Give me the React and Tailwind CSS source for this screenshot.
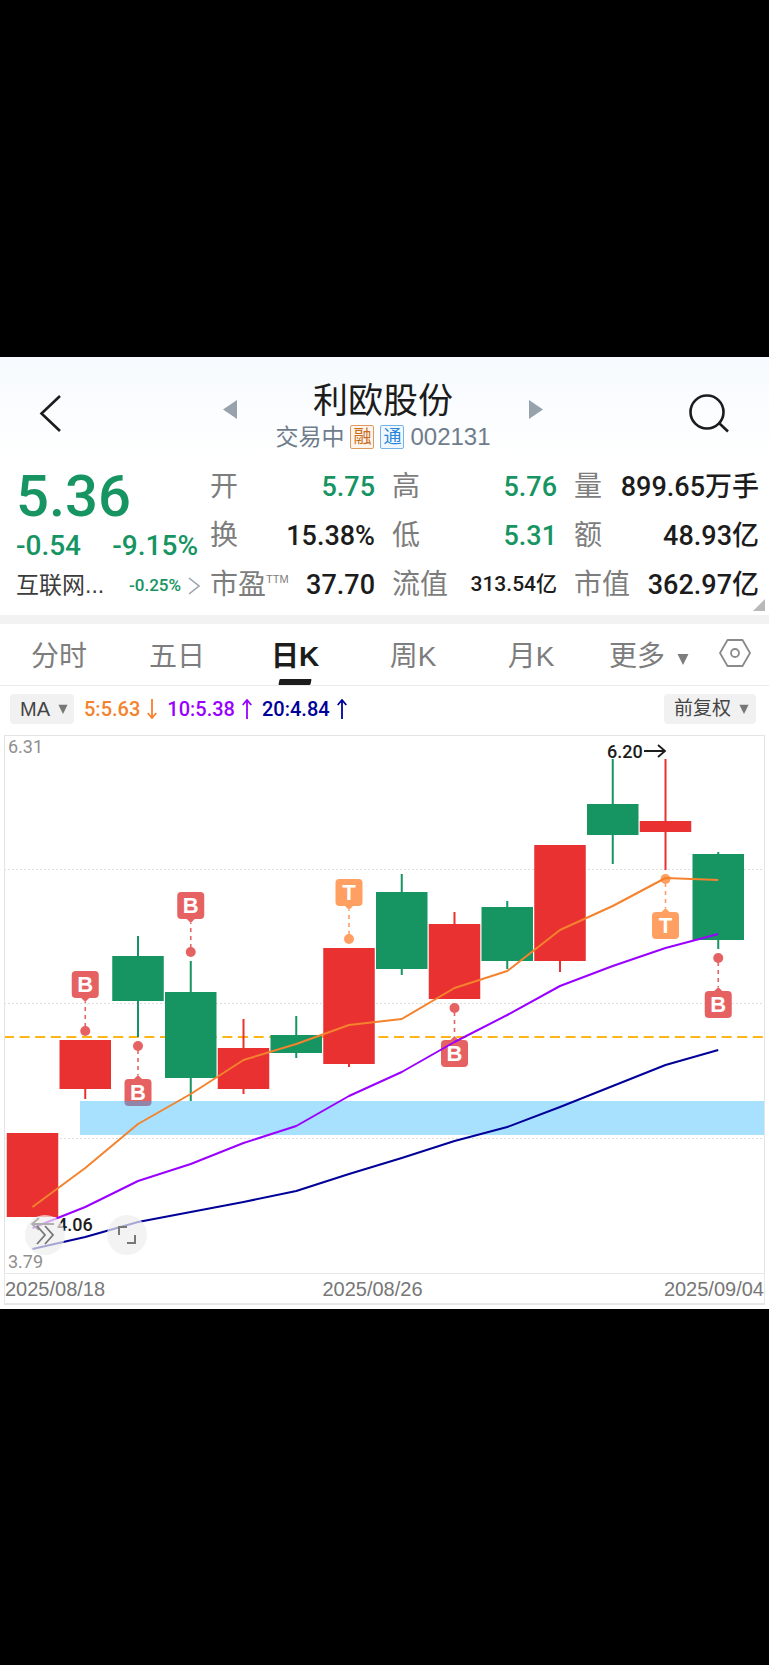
import { useState } from 'react'
import { clsx } from 'clsx'

const STATS = [
  { label: '开', value: '5.75', down: true },
  { label: '高', value: '5.76', down: true },
  { label: '量', value: '899.65万手' },
  { label: '换', value: '15.38%' },
  { label: '低', value: '5.31', down: true },
  { label: '额', value: '48.93亿' },
  { label: '市盈', sup: 'TTM', value: '37.70' },
  { label: '流值', value: '313.54亿', small: true },
  { label: '市值', value: '362.97亿' },
]

const TABS = ['分时', '五日', '日K', '周K', '月K']

const AVERAGES = [
  { text: '5:5.63', dir: 'down', color: 'text-[#f5822d]' },
  { text: '10:5.38', dir: 'up', color: 'text-[#9a00ff]' },
  { text: '20:4.84', dir: 'up', color: 'text-[#000099]' },
]

const RED = '#e93131'
const GREEN = '#169462'

// Candles are evenly spaced along x
const xAt = (i) => 28.5 + i * 52.75

// [high, bodyTop, bodyBottom, low, color]
const CANDLES = [
  [398, 398, 482, 482, RED],
  [305, 305, 354, 364, RED],
  [201, 221, 266, 302, GREEN],
  [226, 257, 343, 366, GREEN],
  [284, 313, 354, 359, RED],
  [281, 300, 318, 323, GREEN],
  [213, 213, 329, 332, RED],
  [139, 157, 234, 240, GREEN],
  [177, 189, 264, 264, RED],
  [166, 172, 226, 234, GREEN],
  [110, 110, 226, 237, RED],
  [24, 69, 100, 129, GREEN],
  [24, 86, 97, 135, RED],
  [117, 119, 205, 214, GREEN],
]

const MA_LINES = [
  { color: '#f5822d', ys: [472, 433, 389, 359, 325, 309, 290, 284, 253, 236, 195, 171, 143, 145] },
  { color: '#9a00ff', ys: [493, 472, 446, 429, 408, 391, 361, 337, 307, 280, 251, 231, 213, 199] },
  { color: '#000099', ys: [514, 502, 487, 477, 467, 456, 439, 423, 406, 392, 372, 351, 330, 315] },
]

// box = top of the label square, dot = centre of the anchor dot
const MARKERS = [
  { i: 1, type: 'B', box: 236, dot: 296 },
  { i: 2, type: 'B', box: 344, dot: 311 },
  { i: 3, type: 'B', box: 157, dot: 217 },
  { i: 6, type: 'T', box: 144, dot: 204 },
  { i: 8, type: 'B', box: 305, dot: 273 },
  { i: 12, type: 'T', box: 177, dot: 144 },
  { i: 13, type: 'B', box: 256, dot: 223 },
]

function Caret({ className }) {
  return (
    <svg viewBox="0 0 12 12" className={className} fill="currentColor" aria-hidden="true">
      <path d="M0.5 1h11L6 12z" />
    </svg>
  )
}

function TrendArrow({ dir }) {
  return (
    <svg viewBox="0 0 10 20" className="h-5 w-2.5" fill="none" stroke="currentColor" strokeWidth="1.8" aria-hidden="true">
      <path d={dir === 'up' ? 'M5 20V1M0.7 6L5 1l4.3 5' : 'M5 0v19M0.7 14L5 19l4.3-5'} />
    </svg>
  )
}

function Header() {
  return (
    <header className="flex items-start justify-between pt-[23px] pr-10 pb-[11px] pl-[37px]">
      <button aria-label="返回" className="mt-[13px] flex h-10 w-10 items-center text-[#1c1c1c]">
        <svg viewBox="0 0 28 40" className="h-10 w-7" fill="none" stroke="currentColor" strokeWidth="2.6">
          <path d="M23 3L4.500 20.500L23 38" />
        </svg>
      </button>
      <div className="flex items-start gap-[38px]">
        <button aria-label="上一只" className="mt-[20px] text-[#98a2ad]">
          <svg viewBox="0 0 14 20" className="h-5 w-3.5" fill="currentColor"><path d="M14 0v19L0 9.500z" /></svg>
        </button>
        <div className="flex flex-col items-center">
          <h1 className="text-[35px] leading-[42px] text-[#1c1c1c]">利欧股份</h1>
          <div className="flex items-center gap-[6px] text-[23px] leading-[30px] text-[#6f7c8b]">
            <span>交易中</span>
            <span className="flex h-6 w-6 items-center justify-center rounded-[2px] border border-[#dc9a62] bg-[#fdf5ec] text-[18px] text-[#c96d1c]">融</span>
            <span className="flex h-6 w-6 items-center justify-center rounded-[2px] border border-[#79b2e6] bg-[#f0f8ff] text-[18px] text-[#2b85d8]">通</span>
            <span className="text-[24px]">002131</span>
          </div>
        </div>
        <button aria-label="下一只" className="mt-[20px] text-[#98a2ad]">
          <svg viewBox="0 0 14 20" className="h-5 w-3.5" fill="currentColor"><path d="M0 0v19L14 9.500z" /></svg>
        </button>
      </div>
      <button aria-label="搜索" className="mt-[13px] text-[#1c1c1c]">
        <svg viewBox="0 0 40 40" className="h-10 w-10" fill="none" stroke="currentColor" strokeWidth="2.6">
          <circle cx="18" cy="19" r="16.500" />
          <path d="M30 30l9 8.500" />
        </svg>
      </button>
    </header>
  )
}

function Quote() {
  return (
    <section className="relative flex pr-[10px] pb-[5px] pl-4">
      <div className="w-[184px] shrink-0 text-[#169462]">
        <div className="font-['Roboto',sans-serif] text-[58px] leading-[66px] font-medium">5.36</div>
        <div className="flex justify-between pr-[2px] font-['Roboto',sans-serif] text-[28px] leading-[34px] font-medium">
          <span>-0.54</span>
          <span>-9.15%</span>
        </div>
        <a href="#sector" className="flex h-[46px] items-center">
          <span className="grow text-[23px] text-[#3c3c3c]">互联网...</span>
          <span className="font-['Roboto',sans-serif] text-[17px] font-medium">-0.25%</span>
          <svg viewBox="0 0 12 18" className="ml-[7px] h-[18px] w-3" fill="none" stroke="#9aa3ad" strokeWidth="1.6">
            <path d="M1 1l10 8l-10 8" />
          </svg>
        </a>
      </div>
      <dl className="grid grow grid-cols-[165fr_165fr_185fr] gap-x-[17px] pl-[10px]">
        {STATS.map((s) => (
          <div key={s.label} className="flex h-[49px] items-center justify-between whitespace-nowrap">
            <dt className="flex text-[28px] leading-[40px] text-[#7d7d7d]">
              {s.label}
              {s.sup && <sup className="top-0 pt-2 text-[11px] leading-[12px]">{s.sup}</sup>}
            </dt>
            <dd
              className={clsx(
                "font-['Roboto','Noto_Sans_CJK_SC',sans-serif] font-medium",
                s.small ? 'text-[21px]' : 'text-[27px]',
                s.down ? 'text-[#169462]' : 'text-[#1c1c1c]'
              )}
            >
              {s.value}
            </dd>
          </div>
        ))}
      </dl>
      <svg viewBox="0 0 12 12" className="absolute right-1 bottom-1 h-3 w-3" fill="#b9b9b9" aria-hidden="true">
        <path d="M12 0v12H0z" />
      </svg>
    </section>
  )
}

function PeriodTabs({ active, onChange }) {
  return (
    <nav className="flex h-[62px] border-b border-[#ebebeb] text-[28px] text-[#7d7d7d]">
      {TABS.map((t) => (
        <button
          key={t}
          onClick={() => onChange(t)}
          aria-pressed={t === active}
          className={clsx('relative flex-1 pt-[5px]', t === active && 'font-bold text-[#1c1c1c]')}
        >
          {t}
          {t === active && (
            <span className="absolute bottom-0 left-1/2 h-[6px] w-8 -translate-x-1/2 -skew-x-12 rounded-[1px] bg-[#1c1c1c]" />
          )}
        </button>
      ))}
      <button className="flex flex-1 items-center justify-center gap-3 pt-[5px]">
        更多
        <Caret className="mt-1 h-3 w-3" />
      </button>
      <button aria-label="设置" className="flex w-[61px] justify-center pt-[14px] pr-2">
        <svg viewBox="0 0 32 30" className="h-[30px] w-8" fill="none" stroke="#8a8a8a" strokeWidth="1.8">
          <path d="M8.500 2h15L31 15l-7.500 13h-15L1 15z" strokeLinejoin="round" />
          <circle cx="16" cy="15" r="4" />
        </svg>
      </button>
    </nav>
  )
}

function IndicatorBar() {
  return (
    <div className="flex h-[49px] items-center justify-between pr-[13px] pb-[2px] pl-[10px]">
      <div className="flex items-center gap-[10px]">
        <button className="flex h-[30px] items-center gap-2 rounded bg-[#f1f1f1] pr-[6px] pl-[10px] text-[20px] text-[#444444]">
          MA
          <Caret className="h-[10px] w-[10px] text-[#777777]" />
        </button>
        {AVERAGES.map((a) => (
          <span
            key={a.text}
            className={clsx("flex items-center gap-[7px] font-['Roboto',sans-serif] text-[20px] font-medium", a.color)}
          >
            {a.text}
            <TrendArrow dir={a.dir} />
          </span>
        ))}
      </div>
      <button className="flex h-[30px] items-center gap-2 rounded bg-[#f1f1f1] pr-[7px] pl-[10px] text-[19px] text-[#444444]">
        前复权
        <Caret className="h-[10px] w-[10px] text-[#777777]" />
      </button>
    </div>
  )
}

function Marker({ i, type, box, dot }) {
  const x = xAt(i)
  const color = type === 'B' ? '#e66262' : '#ff9f61'
  const above = box < dot
  const edge = above ? box + 27 : box
  const tip = above ? edge + 4 : edge - 4
  return (
    <g fill={color}>
      <line x1={x} x2={x} y1={dot} y2={tip} stroke={color} strokeWidth="1.6" strokeDasharray="4 4" strokeDashoffset="-4" />
      <circle cx={x} cy={dot} r="5" />
      <rect x={x - 13.5} y={box} width="27" height="27" rx="4" />
      <path d={`M${x - 4} ${edge}L${x} ${tip}L${x + 4} ${edge}z`} />
      <text x={x} y={box + 21} textAnchor="middle" fill="#ffffff" className="font-['Liberation_Sans',sans-serif] text-[22px] font-bold">
        {type}
      </text>
    </g>
  )
}

function KLineChart() {
  return (
    <svg viewBox="1 1 759 537" className="block w-full" role="img" aria-label="日K线图">
      {[134.5, 268.5, 403.5].map((y) => (
        <line key={y} x1="0" x2="761" y1={y} y2={y} stroke="#dddddd" strokeDasharray="2 2" />
      ))}
      <line x1="0" x2="761" y1="302" y2="302" stroke="#fdb614" strokeWidth="2" strokeDasharray="10 5.600" />

      {CANDLES.map(([high, top, bottom, low, color], i) => (
        <g key={i} fill={color}>
          <rect x={xAt(i) - 1} y={high} width="2" height={low - high} />
          <rect x={xAt(i) - 25.75} y={top} width="51.500" height={bottom - top} />
        </g>
      ))}
      {MARKERS.map((m) => (
        <Marker key={m.i} {...m} />
      ))}

      {/* Support zone */}
      <rect x="76" y="366" width="685" height="34" fill="#a8e1fe" />
      <path d="M120.500 366h27v1a4 4 0 0 1-4 4h-19a4 4 0 0 1-4-4z" fill="#9184a8" />

      {MA_LINES.map((l) => (
        <polyline
          key={l.color}
          points={l.ys.map((y, i) => `${xAt(i)},${y}`).join(' ')}
          fill="none"
          stroke={l.color}
          strokeWidth="2"
          strokeLinejoin="round"
        />
      ))}

      <g className="font-['Roboto',sans-serif] text-[18px] font-medium" fill="#1c1c1c">
        <text x="603" y="23">6.20</text>
        <text x="53" y="496">4.06</text>
        <path d="M640 16h21M654 10l7 6l-7 6M50 489H28M35 483l-7 6l7 6" fill="none" stroke="#1c1c1c" strokeWidth="1.8" />
      </g>
      <g className="font-['Roboto',sans-serif] text-[18px]" fill="#8f8f8f">
        <text x="4" y="18">6.31</text>
        <text x="4" y="533">3.79</text>
      </g>
    </svg>
  )
}

function ChartPanel() {
  return (
    <section className="px-1 pb-1">
      <div className="relative border-x border-t border-[#e4e4e4]">
        <KLineChart />
        <button
          aria-label="展开"
          className="absolute bottom-[18px] left-5 flex h-10 w-10 items-center justify-center rounded-full bg-[#eeeeee]/70"
        >
          <svg viewBox="0 0 20 20" className="h-5 w-5" fill="none" stroke="#777777" strokeWidth="1.8">
            <path d="M2 1l8 9l-8 9M10 1l8 9l-8 9" />
          </svg>
        </button>
        <button
          aria-label="全屏"
          className="absolute bottom-[18px] left-[102px] flex h-10 w-10 items-center justify-center rounded-full bg-[#eeeeee]/70"
        >
          <svg viewBox="0 0 18 18" className="h-[18px] w-[18px]" fill="none" stroke="#777777" strokeWidth="2">
            <path d="M1 9V1h8M9 17h8V9" />
          </svg>
        </button>
      </div>
      <div className="flex h-8 items-center justify-between border-x border-t border-b-2 border-[#e8e8e8] pt-[2px] text-[20px] text-[#777777]">
        <time>2025/08/18</time>
        <time className="mr-6">2025/08/26</time>
        <time>2025/09/04</time>
      </div>
    </section>
  )
}

export default function App() {
  const [period, setPeriod] = useState('日K')

  return (
    <div className="flex min-h-screen flex-col justify-center bg-black font-['Liberation_Sans','Noto_Sans_CJK_SC',sans-serif]">
      <main className="bg-white">
        <div className="bg-linear-to-b from-[#f6fafe] to-white to-40%">
          <Header />
          <Quote />
        </div>
        <div className="h-[9px] bg-[#f2f2f2]" />
        <PeriodTabs active={period} onChange={setPeriod} />
        <IndicatorBar />
        <ChartPanel />
      </main>
    </div>
  )
}
